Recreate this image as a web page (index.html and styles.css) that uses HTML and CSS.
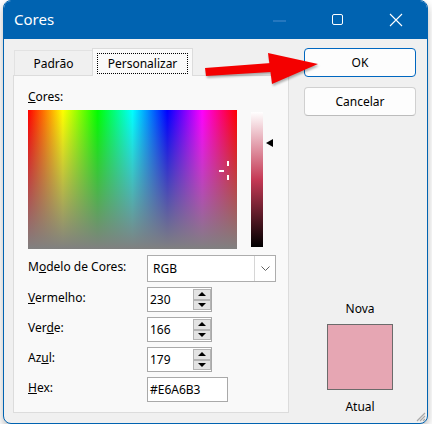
FILE: index.html
```html
<!DOCTYPE html>
<html lang="pt">
<head>
<meta charset="utf-8">
<title>Cores</title>
<link rel="stylesheet" href="styles.css">
</head>
<body>
<div class="window">
  <div class="titlebar">
    <span class="title">Cores</span>
    <div class="caption-btns">
      <span class="cap cap-min"><svg width="14" height="2" viewBox="0 0 14 2"><line x1="0" y1="1" x2="13" y2="1" stroke="#4a8ccc" stroke-width="1"/></svg></span>
      <span class="cap"><svg width="12" height="12" viewBox="0 0 12 12"><rect x="0.5" y="0.5" width="10" height="10" rx="1.5" fill="none" stroke="#fff" stroke-width="1"/></svg></span>
      <span class="cap"><svg width="14" height="14" viewBox="0 0 14 14"><path d="M1 1 L13 13 M13 1 L1 13" stroke="#fff" stroke-width="1.1"/></svg></span>
    </div>
  </div>
  <div class="client">
    <div class="left">
      <div class="tabs">
        <div class="tab">Padrão</div>
        <div class="tab active"><span class="focus">Personalizar</span></div>
      </div>
      <div class="panel">
        <div class="cores-label"><u>C</u>ores:</div>
        <div class="picker">
          <div class="spectrum">
            <span class="ch ch-left"></span>
            <span class="ch ch-top"></span>
            <span class="ch ch-bottom"></span>
          </div>
          <div class="lum"></div>
          <div class="marker"></div>
        </div>
        <div class="form">
          <label class="lbl">M<u>o</u>delo de Cores:</label>
          <div class="combo">
            <span class="combo-text">RGB</span>
            <span class="combo-btn"><svg width="9" height="6" viewBox="0 0 9 6"><polyline points="0.5,0.5 4.5,4.5 8.5,0.5" fill="none" stroke="#606060" stroke-width="1"/></svg></span>
          </div>
          <label class="lbl"><u>V</u>ermelho:</label>
          <div class="spin"><span class="spin-val">230</span><span class="spin-btns"><span class="sb"><i class="up"></i></span><span class="sb"><i class="down"></i></span></span></div>
          <label class="lbl">Ver<u>d</u>e:</label>
          <div class="spin"><span class="spin-val">166</span><span class="spin-btns"><span class="sb"><i class="up"></i></span><span class="sb"><i class="down"></i></span></span></div>
          <label class="lbl">Az<u>u</u>l:</label>
          <div class="spin"><span class="spin-val">179</span><span class="spin-btns"><span class="sb"><i class="up"></i></span><span class="sb"><i class="down"></i></span></span></div>
          <label class="lbl"><u>H</u>ex:</label>
          <div class="hex">#E6A6B3</div>
        </div>
      </div>
    </div>
    <div class="right">
      <div class="btn btn-ok">OK</div>
      <div class="btn btn-cancel">Cancelar</div>
      <div class="preview">
        <div class="pv-label">Nova</div>
        <div class="swatch"></div>
        <div class="pv-label atual">Atual</div>
      </div>
    </div>
  </div>
  <svg class="arrow" width="432" height="431" viewBox="0 0 432 431">
    <polygon points="205,68 271,63 271,72 206,76" fill="#f40000"/>
    <polygon points="268,53 318,64 272,84" fill="#f40000"/>
  </svg>
  <svg class="grip" width="12" height="12" viewBox="0 0 12 12">
    <path d="M11 3 L3 11 M11 6 L6 11 M11 9 L9 11" stroke="#a8a8a8" stroke-width="1.2"/>
  </svg>
</div>
</body>
</html>
```
FILE: styles.css
```css
html, body {
  margin: 0;
  padding: 0;
  background: #ffffff;
}
body {
  font-family: "Noto Sans", "Open Sans", sans-serif;
  font-size: 12px;
  color: #000;
}
.window {
  position: relative;
  box-sizing: border-box;
  margin-left: 3px;
  width: 425px;
  height: 424px;
  border: 1px solid #0063b1;
  border-radius: 8px;
  background: #f0f0f0;
  box-shadow: 0 4px 8px rgba(0,0,0,0.28);
  overflow: hidden;
}
.titlebar {
  height: 38px;
  background: #0063b1;
  display: flex;
  align-items: center;
  padding-left: 10px;
}
.title {
  color: #fff;
  font-size: 15px;
  flex: 1;
  line-height: 20px;
  margin-top: -2px;
}
.caption-btns {
  display: flex;
  margin-right: 2px;
}
.cap {
  width: 58px;
  height: 38px;
  display: flex;
  align-items: center;
  justify-content: center;
}
.cap svg { display: block; }
.cap-min svg { margin-top: 2px; }
.client {
  display: flex;
  padding: 9px 0 0 9px;
}
.left {
  width: 276px;
}
.tabs {
  display: flex;
  align-items: flex-end;
  height: 27px;
  padding-left: 1px;
}
.tab {
  box-sizing: border-box;
  width: 79px;
  height: 25px;
  border: 1px solid #e2e2e2;
  border-bottom: none;
  background: #f0f0f0;
  display: flex;
  align-items: center;
  justify-content: center;
  padding-top: 1px;
}
.tab.active {
  position: relative;
  z-index: 1;
  width: 101px;
  height: 28px;
  margin-left: -1px;
  margin-bottom: -1px;
  background: #f9f9f9;
  border-color: #dcdcdc;
  padding-top: 0;
}
.focus {
  box-sizing: border-box;
  width: 91px;
  height: 21px;
  border: 1px dotted #000;
  display: flex;
  align-items: center;
  justify-content: center;
  margin-top: 1px;
}
.panel {
  box-sizing: border-box;
  width: 276px;
  height: 338px;
  border: 1px solid #dcdcdc;
  background: #f9f9f9;
  padding: 13px 0 0 14px;
}
.cores-label {
  line-height: 16px;
}
.picker {
  display: flex;
  align-items: flex-start;
  margin-top: 5px;
}
.spectrum {
  position: relative;
  width: 209px;
  height: 139px;
  background:
    linear-gradient(to bottom, rgba(128,128,128,0) 0%, rgba(128,128,128,1) 100%),
    linear-gradient(to right, #ff0000 0%, #ffff00 16.67%, #00ff00 33.33%, #00ffff 50%, #0000ff 66.67%, #ff00ff 83.33%, #ff0000 100%);
}
.ch {
  position: absolute;
  background: #fff;
}
.ch-left { left: 191px; top: 60px; width: 5px; height: 2px; }
.ch-top { left: 199px; top: 51px; width: 2px; height: 5px; }
.ch-bottom { left: 199px; top: 65px; width: 2px; height: 5px; }
.lum {
  width: 12px;
  height: 135px;
  margin-left: 14px;
  margin-top: 2px;
  background: linear-gradient(to bottom, #ffffff 0%, #c53955 50%, #000000 100%);
}
.marker {
  width: 0;
  height: 0;
  margin-left: 3px;
  margin-top: 29px;
  border-right: 7px solid #000;
  border-top: 4px solid transparent;
  border-bottom: 4px solid transparent;
}
.form {
  display: grid;
  grid-template-columns: 119px auto;
  row-gap: 5px;
  align-items: center;
  justify-items: start;
  margin-top: 6px;
}
.lbl {
  line-height: 16px;
  margin-top: -3px;
}
.combo {
  box-sizing: border-box;
  width: 129px;
  height: 27px;
  border: 1px solid #adadad;
  background: #fff;
  display: flex;
  align-items: stretch;
}
.combo-text {
  flex: 1;
  padding-left: 5px;
  display: flex;
  align-items: center;
}
.combo-btn {
  box-sizing: border-box;
  width: 21px;
  margin: 0;
  border-left: 1px solid #d6d6d6;
  display: flex;
  align-items: center;
  justify-content: center;
}
.combo-btn svg { display: block; }
.spin {
  box-sizing: border-box;
  width: 65px;
  height: 25px;
  border: 1px solid #a9a9a9;
  background: #fff;
  display: flex;
  align-items: stretch;
}
.spin-val {
  width: 44px;
  padding-left: 2px;
  display: flex;
  align-items: center;
}
.spin-btns {
  display: flex;
  flex-direction: column;
  width: 19px;
  padding: 1px 0;
}
.sb {
  box-sizing: border-box;
  height: 11px;
  background: #e3e3e3;
  border: 1px solid #b4b4b4;
  display: flex;
  align-items: center;
  justify-content: center;
}
.sb + .sb { margin-top: 0; }
.up, .down {
  display: block;
  width: 0;
  height: 0;
  border-left: 4px solid transparent;
  border-right: 4px solid transparent;
}
.up { border-bottom: 4px solid #000; }
.down { border-top: 4px solid #000; }
.hex {
  box-sizing: border-box;
  width: 81px;
  height: 25px;
  border: 1px solid #a9a9a9;
  background: #fff;
  padding-left: 2px;
  display: flex;
  align-items: center;
}
.right {
  width: 112px;
  margin-left: 15px;
  display: flex;
  flex-direction: column;
  align-items: center;
}
.btn {
  box-sizing: border-box;
  width: 112px;
  height: 29px;
  border-radius: 4px;
  background: #fdfdfd;
  display: flex;
  align-items: center;
  justify-content: center;
}
.btn-ok {
  border: 1px solid #0067c0;
}
.btn-cancel {
  margin-top: 10px;
  border: 1px solid #d0d0d0;
  border-bottom-color: #bcbcbc;
}
.preview {
  display: flex;
  flex-direction: column;
  align-items: center;
  margin-top: 185px;
}
.pv-label {
  line-height: 16px;
}
.swatch {
  box-sizing: border-box;
  width: 66px;
  height: 66px;
  margin-top: 7px;
  border: 1px solid #6b6b6b;
  background: #e6a6b3;
}
.atual {
  margin-top: 9px;
}
.arrow {
  position: absolute;
  left: -4px;
  top: -1px;
  pointer-events: none;
  filter: drop-shadow(1px 2px 1px rgba(0,0,0,0.3));
}
.grip {
  position: absolute;
  right: 1px;
  bottom: 1px;
}
```
